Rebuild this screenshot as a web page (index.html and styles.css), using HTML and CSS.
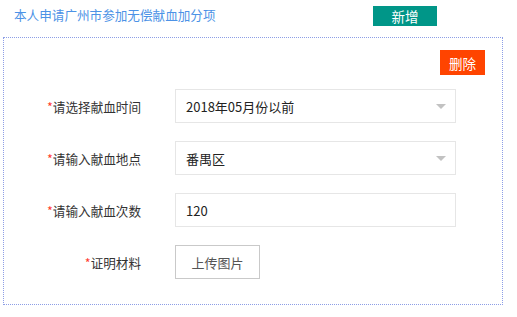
FILE: index.html
```html
<!DOCTYPE html>
<html lang="zh-CN">

<head>
    <meta charset="UTF-8">
    <meta name="viewport" content="width=device-width, initial-scale=1.0">
    <title>无偿献血加分项</title>
    <link rel="stylesheet" href="styles.css">
</head>

<body>
    <div class="head">
        <span class="title">本人申请广州市参加无偿献血加分项</span>
        <button class="btn btn-add">新增</button>
    </div>

    <div class="box">
        <div class="tools">
            <button class="btn btn-del">删除</button>
        </div>

        <div class="row">
            <label class="label"><i>*</i>请选择献血时间</label>
            <div class="field select">2018年05月份以前<span class="arrow"></span></div>
        </div>

        <div class="row">
            <label class="label"><i>*</i>请输入献血地点</label>
            <div class="field select">番禺区<span class="arrow"></span></div>
        </div>

        <div class="row">
            <label class="label"><i>*</i>请输入献血次数</label>
            <input class="field" type="text" value="120">
        </div>

        <div class="row">
            <label class="label"><i>*</i>证明材料</label>
            <button class="upload">上传图片</button>
        </div>
    </div>
</body>

</html>
```

FILE: styles.css
```css
body {
    margin: 0;
    font-family: "Noto Sans CJK SC", "Noto Sans", sans-serif;
    font-size: 12.6px;
    color: #333;
    background: #fff;
}

.head {
    display: flex;
    justify-content: space-between;
    align-items: center;
    width: 437px;
    height: 32px;
    padding-left: 14px;
    margin-bottom: 5px;
    box-sizing: border-box;
}

.title {
    color: #4c92e6;
    margin-top: -3px;
}

.btn {
    border: none;
    color: #fff;
    font-family: inherit;
    font-size: 13.5px;
    padding: 0;
    cursor: pointer;
}

.btn-add {
    width: 64px;
    height: 20px;
    background-color: #009688;
}

.btn-del {
    width: 45px;
    height: 25px;
    background-color: #ff4400;
}

.box {
    margin-left: 3px;
    width: 500px;
    height: 268px;
    border: 1px dotted #8d9ee6;
    padding: 12px 17px 0 0;
    box-sizing: border-box;
}

.tools {
    display: flex;
    justify-content: flex-end;
    margin-bottom: 14px;
}

.row {
    display: flex;
    align-items: center;
    margin-bottom: 18px;
}

.label {
    width: 137px;
    text-align: right;
    margin-right: 34px;
    color: #333;
}

.label i {
    font-style: normal;
    color: #ff3b30;
}

.field {
    position: relative;
    width: 281px;
    height: 34px;
    border: 1px solid #e6e6e6;
    padding: 0 10px;
    box-sizing: border-box;
    font-family: inherit;
    font-size: 13px;
    color: #222;
    display: flex;
    align-items: center;
    outline: none;
}

.arrow {
    position: absolute;
    right: 9px;
    top: 14px;
    width: 0;
    height: 0;
    border-left: 5px solid transparent;
    border-right: 5px solid transparent;
    border-top: 5px solid #c2c2c2;
}

.upload {
    width: 85px;
    height: 34px;
    border: 1px solid #c9c9c9;
    background: #fff;
    font-family: inherit;
    font-size: 13px;
    color: #555;
    padding: 0;
}
```
